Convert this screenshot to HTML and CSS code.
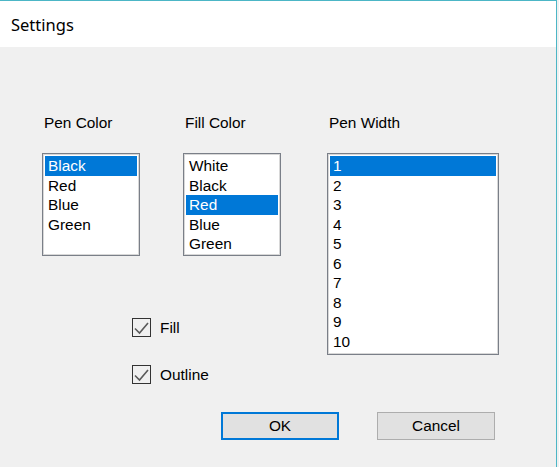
FILE: index.html
```html
<!DOCTYPE html>
<html>
<head>
<meta charset="utf-8">
<link rel="stylesheet" href="styles.css">
</head>
<body>
<div class="window">
  <div class="titlebar">Settings</div>
  <div class="client">
    <div class="content">
      <div class="left">
        <div class="lists">
          <div class="group">
            <div class="label">Pen Color</div>
            <ul class="listbox short">
              <li class="sel">Black</li>
              <li>Red</li>
              <li>Blue</li>
              <li>Green</li>
            </ul>
          </div>
          <div class="group">
            <div class="label">Fill Color</div>
            <ul class="listbox short">
              <li>White</li>
              <li>Black</li>
              <li class="sel">Red</li>
              <li>Blue</li>
              <li>Green</li>
            </ul>
          </div>
        </div>
        <div class="checks">
          <label class="check">
            <span class="box"><svg viewBox="0 0 19 19" width="19" height="19"><polyline points="3,10.5 7.5,15 16,5" fill="none" stroke="#5a5a5a" stroke-width="1.6"/></svg></span>
            <span>Fill</span>
          </label>
          <label class="check">
            <span class="box"><svg viewBox="0 0 19 19" width="19" height="19"><polyline points="3,10.5 7.5,15 16,5" fill="none" stroke="#5a5a5a" stroke-width="1.6"/></svg></span>
            <span>Outline</span>
          </label>
        </div>
      </div>
      <div class="group wide">
        <div class="label">Pen Width</div>
        <ul class="listbox tall">
          <li class="sel">1</li>
          <li>2</li>
          <li>3</li>
          <li>4</li>
          <li>5</li>
          <li>6</li>
          <li>7</li>
          <li>8</li>
          <li>9</li>
          <li>10</li>
        </ul>
      </div>
    </div>
    <div class="buttons">
      <button class="btn default">OK</button>
      <button class="btn">Cancel</button>
    </div>
  </div>
</div>
</body>
</html>
```
FILE: styles.css
```css
html, body {
  margin: 0;
  padding: 0;
  background: #f0f0f0;
}
.window {
  width: 557px;
  height: 467px;
  box-sizing: border-box;
  border-top: 1px solid #4cb6c6;
  border-right: 1px solid #4cb6c6;
  background: #f0f0f0;
  font-family: "Liberation Sans", Arial, sans-serif;
  font-size: 15.4px;
  color: #000;
  overflow: hidden;
}
.titlebar {
  height: 46px;
  background: #fff;
  box-sizing: border-box;
  padding: 13px 0 0 11px;
  font-family: "Noto Sans", "Open Sans", sans-serif;
  font-size: 16.5px;
  line-height: 22px;
}
.client {
  background: #f0f0f0;
}
.content {
  display: flex;
  align-items: flex-start;
  padding: 67px 0 0 42px;
}
.left {
  display: flex;
  flex-direction: column;
}
.lists {
  display: flex;
  gap: 43px;
}
.group {
  width: 98px;
}
.group.wide {
  width: 172px;
  margin-left: 46px;
}
.label {
  line-height: 17px;
  padding-left: 2px;
  margin-bottom: 22px;
}
.listbox {
  list-style: none;
  margin: 0;
  padding: 2px;
  background: #fff;
  border: 1px solid #7a7f88;
  box-shadow: inset 0 0 0 1px #d8d8d8;
  box-sizing: border-box;
  width: 100%;
}
.listbox.short { height: 103px; }
.listbox.tall { height: 202px; }
.listbox li {
  line-height: 19.5px;
  height: 19.5px;
  padding-left: 3px;
}
.listbox li.sel {
  background: #0078d7;
  color: #fff;
}
.checks {
  display: flex;
  flex-direction: column;
  gap: 28px;
  margin: 62px 0 0 90px;
}
.check {
  display: flex;
  align-items: center;
  gap: 9px;
  height: 19px;
}
.box {
  width: 19px;
  height: 19px;
  box-sizing: border-box;
  border: 1.5px solid #333;
  display: flex;
  align-items: center;
  justify-content: center;
  overflow: hidden;
}
.box svg {
  flex: none;
}
.buttons {
  display: flex;
  gap: 38px;
  margin: 28px 0 0 221px;
}
.btn {
  width: 118px;
  height: 28px;
  box-sizing: border-box;
  background: #e1e1e1;
  border: 1px solid #adadad;
  font-family: "Liberation Sans", Arial, sans-serif;
  font-size: 15.4px;
  color: #000;
  padding: 0;
}
.btn.default {
  border: 2px solid #0078d7;
}
```
